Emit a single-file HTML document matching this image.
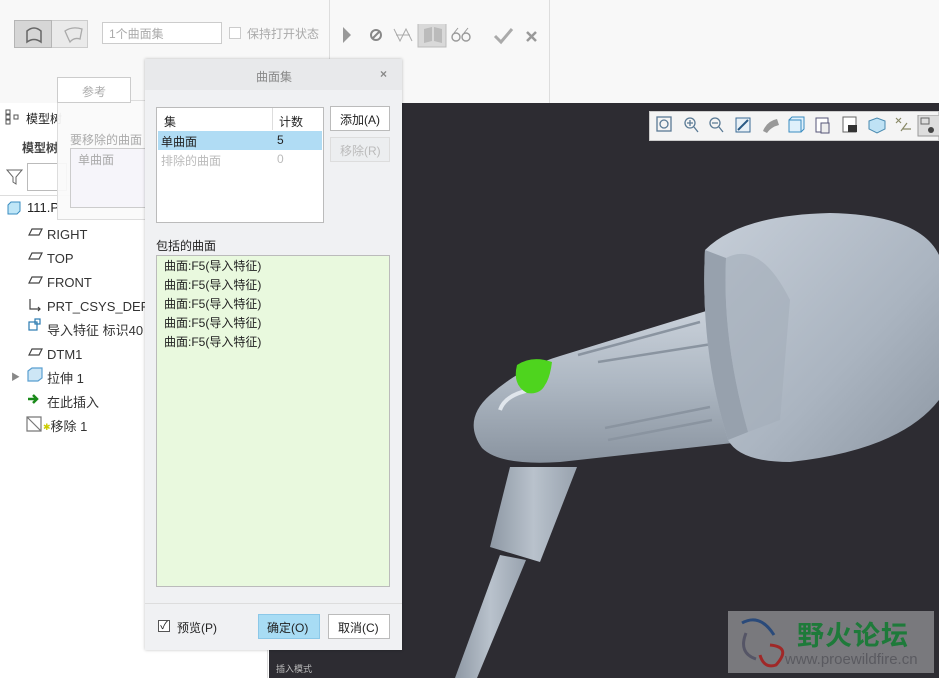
<!DOCTYPE html>
<html><head><meta charset="utf-8"><style>
*{margin:0;padding:0;box-sizing:border-box}
body{width:939px;height:678px;overflow:hidden;position:relative;background:#fff;font-family:"Liberation Sans","Noto Sans CJK SC",sans-serif;font-size:12px;color:#222}
.abs{position:absolute}
.t{position:absolute;white-space:nowrap}
</style></head><body>
<!-- ribbon -->
<div class="abs" style="left:0;top:0;width:939px;height:103px;background:#f8f8f8"></div>
<div class="abs" style="left:549px;top:0;width:1px;height:103px;background:#ddd"></div>
<div class="abs" style="left:14px;top:20px;width:74px;height:28px;border:1px solid #ccc;background:#eaeaea"></div>
<div class="abs" style="left:14px;top:20px;width:38px;height:28px;background:#d6d6d6;border:1px solid #b5b5b5"></div>
<svg class="abs" style="left:24px;top:25px" width="20" height="20"><path d="M3 17V6Q10 0 17 6V17Q10 12 3 17Z" fill="none" stroke="#666" stroke-width="1.5"/></svg>
<svg class="abs" style="left:62px;top:25px" width="24" height="20"><path d="M3 6Q10 1 20 4L18 14Q12 12 8 17Q6 13 3 6Z" fill="none" stroke="#aaa" stroke-width="1.3"/></svg>
<div class="abs" style="left:102px;top:22px;width:120px;height:22px;border:1px solid #ccc;background:#fff"></div>
<div class="t" style="left:109px;top:25px;color:#aaa">1个曲面集</div>
<div class="abs" style="left:229px;top:27px;width:12px;height:12px;border:1px solid #ccc;background:#fff"></div>
<div class="t" style="left:247px;top:25px;color:#aaa">保持打开状态</div>
<div class="abs" style="left:329px;top:0;width:1px;height:103px;background:#ddd"></div>
<svg class="abs" style="left:340px;top:24px" width="200" height="24">
<path d="M3 3L11 11L3 19Z" fill="#999"/>
<circle cx="36" cy="11" r="5" fill="none" stroke="#888" stroke-width="2"/><path d="M32 15L40 7" stroke="#888" stroke-width="2"/>
<path d="M54 5L60 17L66 5L72 17M56 11H70" fill="none" stroke="#aaa"/>
<rect x="78" y="-3" width="28" height="26" fill="#d9d9d9" stroke="#bbb"/><path d="M84 5L92 3V17L84 19Z M94 3L102 5V19L94 17Z" fill="#bbb"/>
<circle cx="116" cy="13" r="4" fill="none" stroke="#999" stroke-width="1.4"/><circle cx="126" cy="13" r="4" fill="none" stroke="#999" stroke-width="1.4"/><path d="M114 9L118 4M124 9L128 4" stroke="#999"/>
<path d="M155 12L161 18L172 5" fill="none" stroke="#aaa" stroke-width="3"/>
<path d="M187 8L196 17M196 8L187 17" stroke="#999" stroke-width="2.5"/>
</svg>
<!-- left panel -->
<div class="abs" style="left:0;top:103px;width:268px;height:575px;background:#fff;border-right:1px solid #ddd"></div>
<svg class="abs" style="left:5px;top:109px" width="16" height="16"><rect x="1" y="1" width="4" height="4" fill="none" stroke="#555"/><rect x="1" y="6" width="4" height="4" fill="none" stroke="#555"/><rect x="1" y="11" width="4" height="4" fill="none" stroke="#555"/><rect x="9" y="6" width="4" height="4" fill="none" stroke="#555"/></svg>
<div class="t" style="left:26px;top:110px">模型树</div>
<div class="t" style="left:22px;top:139px;font-weight:bold;color:#444">模型树</div>
<svg class="abs" style="left:6px;top:168px" width="18" height="18"><path d="M1 2H16L10 9V16L7 14V9Z" fill="none" stroke="#666"/></svg>
<div class="abs" style="left:27px;top:163px;width:40px;height:28px;border:1px solid #bbb"></div>
<div class="abs" style="left:0;top:195px;width:268px;height:1px;background:#ddd"></div>
<svg class="abs" style="left:6px;top:201px" width="16" height="14"><path d="M2 4L5 1H14V10L11 13H2Z" fill="#bfe6f7" stroke="#3a8cc0"/></svg>
<div class="t" style="left:27px;top:200px;font-size:13px">111.P</div>
<svg class="abs" style="left:24px;top:223px" width="24" height="216" fill="none" stroke="#444" stroke-width="1.2">
<path d="M5 12L8 6H18L15 12Z"/>
<path d="M5 36L8 30H18L15 36Z"/>
<path d="M5 60L8 54H18L15 60Z"/>
<path d="M6 76V86H16M14 84L16 86L14 88" />
<rect x="5" y="99" width="8" height="8" stroke="#2a7ab0"/><rect x="11" y="96" width="5" height="5" stroke="#2a7ab0"/>
<path d="M5 132L8 126H18L15 132Z"/>
<path d="M4 148L8 145H18V155L14 158H4Z" fill="#cde6f6" stroke="#5a9fd0"/>
<path d="M4 176H12M9 172L13 176L9 180" stroke="#1a8a1a" stroke-width="2.5"/>
<path d="M3 194H17V208H3Z M3 194L17 208" stroke="#777"/>
</svg>
<div style="position:absolute;left:47px;top:223px;font-size:13px;line-height:24px;color:#333">
<div>RIGHT</div><div>TOP</div><div>FRONT</div><div>PRT_CSYS_DEF</div><div>导入特征 标识40</div><div>DTM1</div><div>拉伸 1</div><div>在此插入</div><div><span style="color:#cc0;font-size:9px;vertical-align:top;margin-left:-4px">✱</span>移除 1</div>
</div>
<div class="t" style="left:11px;top:370px;color:#888;font-size:9px">▶</div>
<!-- reference panel -->
<div class="abs" style="left:57px;top:100px;width:100px;height:120px;background:rgba(250,250,250,.93);border:1px solid #ddd"></div>
<div class="abs" style="left:57px;top:77px;width:74px;height:26px;background:#fff;border:1px solid #ccc"></div>
<div class="t" style="left:82px;top:83px;color:#aaa">参考</div>
<div class="t" style="left:70px;top:131px;color:#aaa">要移除的曲面</div>
<div class="abs" style="left:70px;top:148px;width:80px;height:60px;border:1px solid #ccc;background:#f6f5fa"></div>
<div class="t" style="left:78px;top:151px;color:#aaa">单曲面</div>
<!-- viewport -->
<div class="abs" style="left:269px;top:103px;width:670px;height:575px;background:#2d2c32"></div>
<svg class="abs" style="left:0;top:0" width="939" height="678">
<defs>
<linearGradient id="g1" x1="0" y1="0" x2="0" y2="1"><stop offset="0" stop-color="#cdd4dd"/><stop offset=".5" stop-color="#aeb8c3"/><stop offset="1" stop-color="#8a94a0"/></linearGradient>
<linearGradient id="g2" x1="0" y1="0" x2="1" y2="1"><stop offset="0" stop-color="#c6ced8"/><stop offset=".6" stop-color="#aab4c0"/><stop offset="1" stop-color="#8e98a4"/></linearGradient>
<linearGradient id="g3" x1="0" y1="0" x2="1" y2="0"><stop offset="0" stop-color="#8e98a4"/><stop offset=".5" stop-color="#b9c2cc"/><stop offset="1" stop-color="#98a2ae"/></linearGradient>
</defs>
<path d="M500 555L526 560L477 678L455 678Z" fill="url(#g3)"/>
<path d="M510 467L577 467L540 562L490 547Z" fill="url(#g3)"/>
<path d="M490 395Q520 368 560 356L742 300L760 440L560 462Q500 466 482 448Q462 420 490 395Z" fill="url(#g1)"/>
<path d="M500 410Q505 395 530 390" stroke="#e0e6ec" stroke-width="4" fill="none"/>
<path d="M578 355L700 322M598 362L712 344M605 428L710 407M608 440L712 420" stroke="#8a94a0" stroke-width="2.5" fill="none"/>
<path d="M705 250Q740 215 830 213Q920 215 939 255L939 400Q900 450 790 462Q740 462 728 440Q700 350 705 250Z" fill="url(#g2)"/>
<path d="M705 250Q700 350 728 440L748 432Q722 340 726 258Z" fill="#97a1ad"/>
<path d="M726 258Q760 240 790 300L780 420L748 432Q722 340 726 258Z" fill="#a3adb9" opacity=".6"/>
<path d="M517 365Q532 355 552 362Q550 378 545 385Q540 395 527 393Q512 385 517 365Z" fill="#4ed41e"/>
</svg>
<div class="abs" style="left:649px;top:111px;width:290px;height:30px;background:#f4f4f4;border:1px solid #ccc"></div>
<svg class="abs" style="left:655px;top:115px" width="284" height="22">
<g fill="none" stroke="#5a7a95" stroke-width="1.3">
<rect x="2" y="2" width="14" height="14"/><circle cx="9" cy="9" r="4"/>
<circle cx="35" cy="8" r="5"/><path d="M39 12L43 17M32 8H38M35 5V11"/>
<circle cx="60" cy="8" r="5"/><path d="M64 12L68 17M57 8H63"/>
</g>
<rect x="81" y="3" width="14" height="14" fill="#e8f0f6" stroke="#3a6a95"/><path d="M83 15L93 5" stroke="#2a5a85" stroke-width="2"/>
<path d="M108 16Q112 6 122 4L124 10Q116 12 112 18Z" fill="#999"/>
<path d="M134 5H146V17H134Z M134 5L137 2H149V14L146 17" fill="#dff0fb" stroke="#3a8cc0"/>
<rect x="161" y="3" width="12" height="14" fill="#fff" stroke="#557"/><rect x="166" y="8" width="8" height="10" fill="#eee" stroke="#557"/>
<rect x="188" y="2" width="13" height="15" fill="#fff" stroke="#666"/><rect x="193" y="10" width="9" height="7" fill="#333"/>
<path d="M214 6L222 3L230 6V14L222 18L214 14Z" fill="#bfe2f5" stroke="#4a8ab0"/>
<path d="M241 3L246 8M246 3L241 8M246 16L252 8M248 14H256" stroke="#886" stroke-width="1.2"/>
<rect x="263" y="0" width="22" height="21" fill="#ddd" stroke="#999"/><rect x="266" y="3" width="8" height="6" fill="none" stroke="#666"/><circle cx="276" cy="15" r="3" fill="#444"/>
</svg>
<div class="t" style="left:276px;top:662px;color:#bbb;font-size:9px">插入模式</div>
<!-- watermark -->
<div class="abs" style="left:728px;top:611px;width:206px;height:62px;background:#79797d"></div>
<svg class="abs" style="left:730px;top:613px" width="60" height="60"><path d="M12 10Q30 0 44 22" fill="none" stroke="#2a4a7a" stroke-width="3"/><path d="M40 32Q62 34 46 52Q34 56 30 42" fill="none" stroke="#a02828" stroke-width="3"/><path d="M16 20Q8 40 26 46" fill="none" stroke="#556" stroke-width="3"/></svg>
<div class="t" style="left:797px;top:614px;color:#1e7a3a;font-size:27px;font-weight:bold;letter-spacing:1px">野火论坛</div>
<div class="t" style="left:785px;top:651px;color:#5a5a60;font-size:15px">www.proewildfire.cn</div>
<!-- dialog -->
<div class="abs" style="left:145px;top:59px;width:257px;height:591px;background:#f0f1f3;box-shadow:0 0 3px rgba(0,0,0,.25)"></div>
<div class="abs" style="left:145px;top:59px;width:257px;height:31px;background:#e8e9eb"></div>
<div class="t" style="left:256px;top:68px;color:#888">曲面集</div>
<div class="t" style="left:380px;top:67px;color:#888;font-weight:bold">×</div>
<div class="abs" style="left:156px;top:107px;width:168px;height:116px;background:#fff;border:1px solid #bbb"></div>
<div class="abs" style="left:272px;top:108px;width:1px;height:22px;background:#ddd"></div>
<div class="t" style="left:164px;top:113px">集</div>
<div class="t" style="left:279px;top:113px">计数</div>
<div class="abs" style="left:158px;top:131px;width:164px;height:19px;background:#b0dcf4"></div>
<div class="t" style="left:161px;top:133px">单曲面</div>
<div class="t" style="left:277px;top:133px">5</div>
<div class="t" style="left:161px;top:152px;color:#bbb">排除的曲面</div>
<div class="t" style="left:277px;top:152px;color:#bbb">0</div>
<div class="abs" style="left:330px;top:106px;width:60px;height:25px;background:#fff;border:1px solid #bbb"></div>
<div class="t" style="left:340px;top:111px">添加(A)</div>
<div class="abs" style="left:330px;top:137px;width:60px;height:25px;background:#eceef0;border:1px solid #ddd"></div>
<div class="t" style="left:340px;top:142px;color:#bbb">移除(R)</div>
<div class="t" style="left:156px;top:237px">包括的曲面</div>
<div class="abs" style="left:156px;top:255px;width:234px;height:332px;background:#e9f9de;border:1px solid #bbb"></div>
<div style="position:absolute;left:164px;top:257px;line-height:19px">曲面:F5(导入特征)<br>曲面:F5(导入特征)<br>曲面:F5(导入特征)<br>曲面:F5(导入特征)<br>曲面:F5(导入特征)</div>
<div class="abs" style="left:145px;top:603px;width:257px;height:1px;background:#ddd"></div>
<div class="abs" style="left:158px;top:620px;width:12px;height:12px;border:1px solid #555;background:#fff;font-size:11px;line-height:10px;text-align:center">✓</div>
<div class="t" style="left:177px;top:619px">预览(P)</div>
<div class="abs" style="left:258px;top:614px;width:62px;height:25px;background:#a8dcf4;border:1px solid #8cc8e8"></div>
<div class="t" style="left:267px;top:619px">确定(O)</div>
<div class="abs" style="left:328px;top:614px;width:62px;height:25px;background:#fff;border:1px solid #bbb"></div>
<div class="t" style="left:338px;top:619px">取消(C)</div>
</body></html>
